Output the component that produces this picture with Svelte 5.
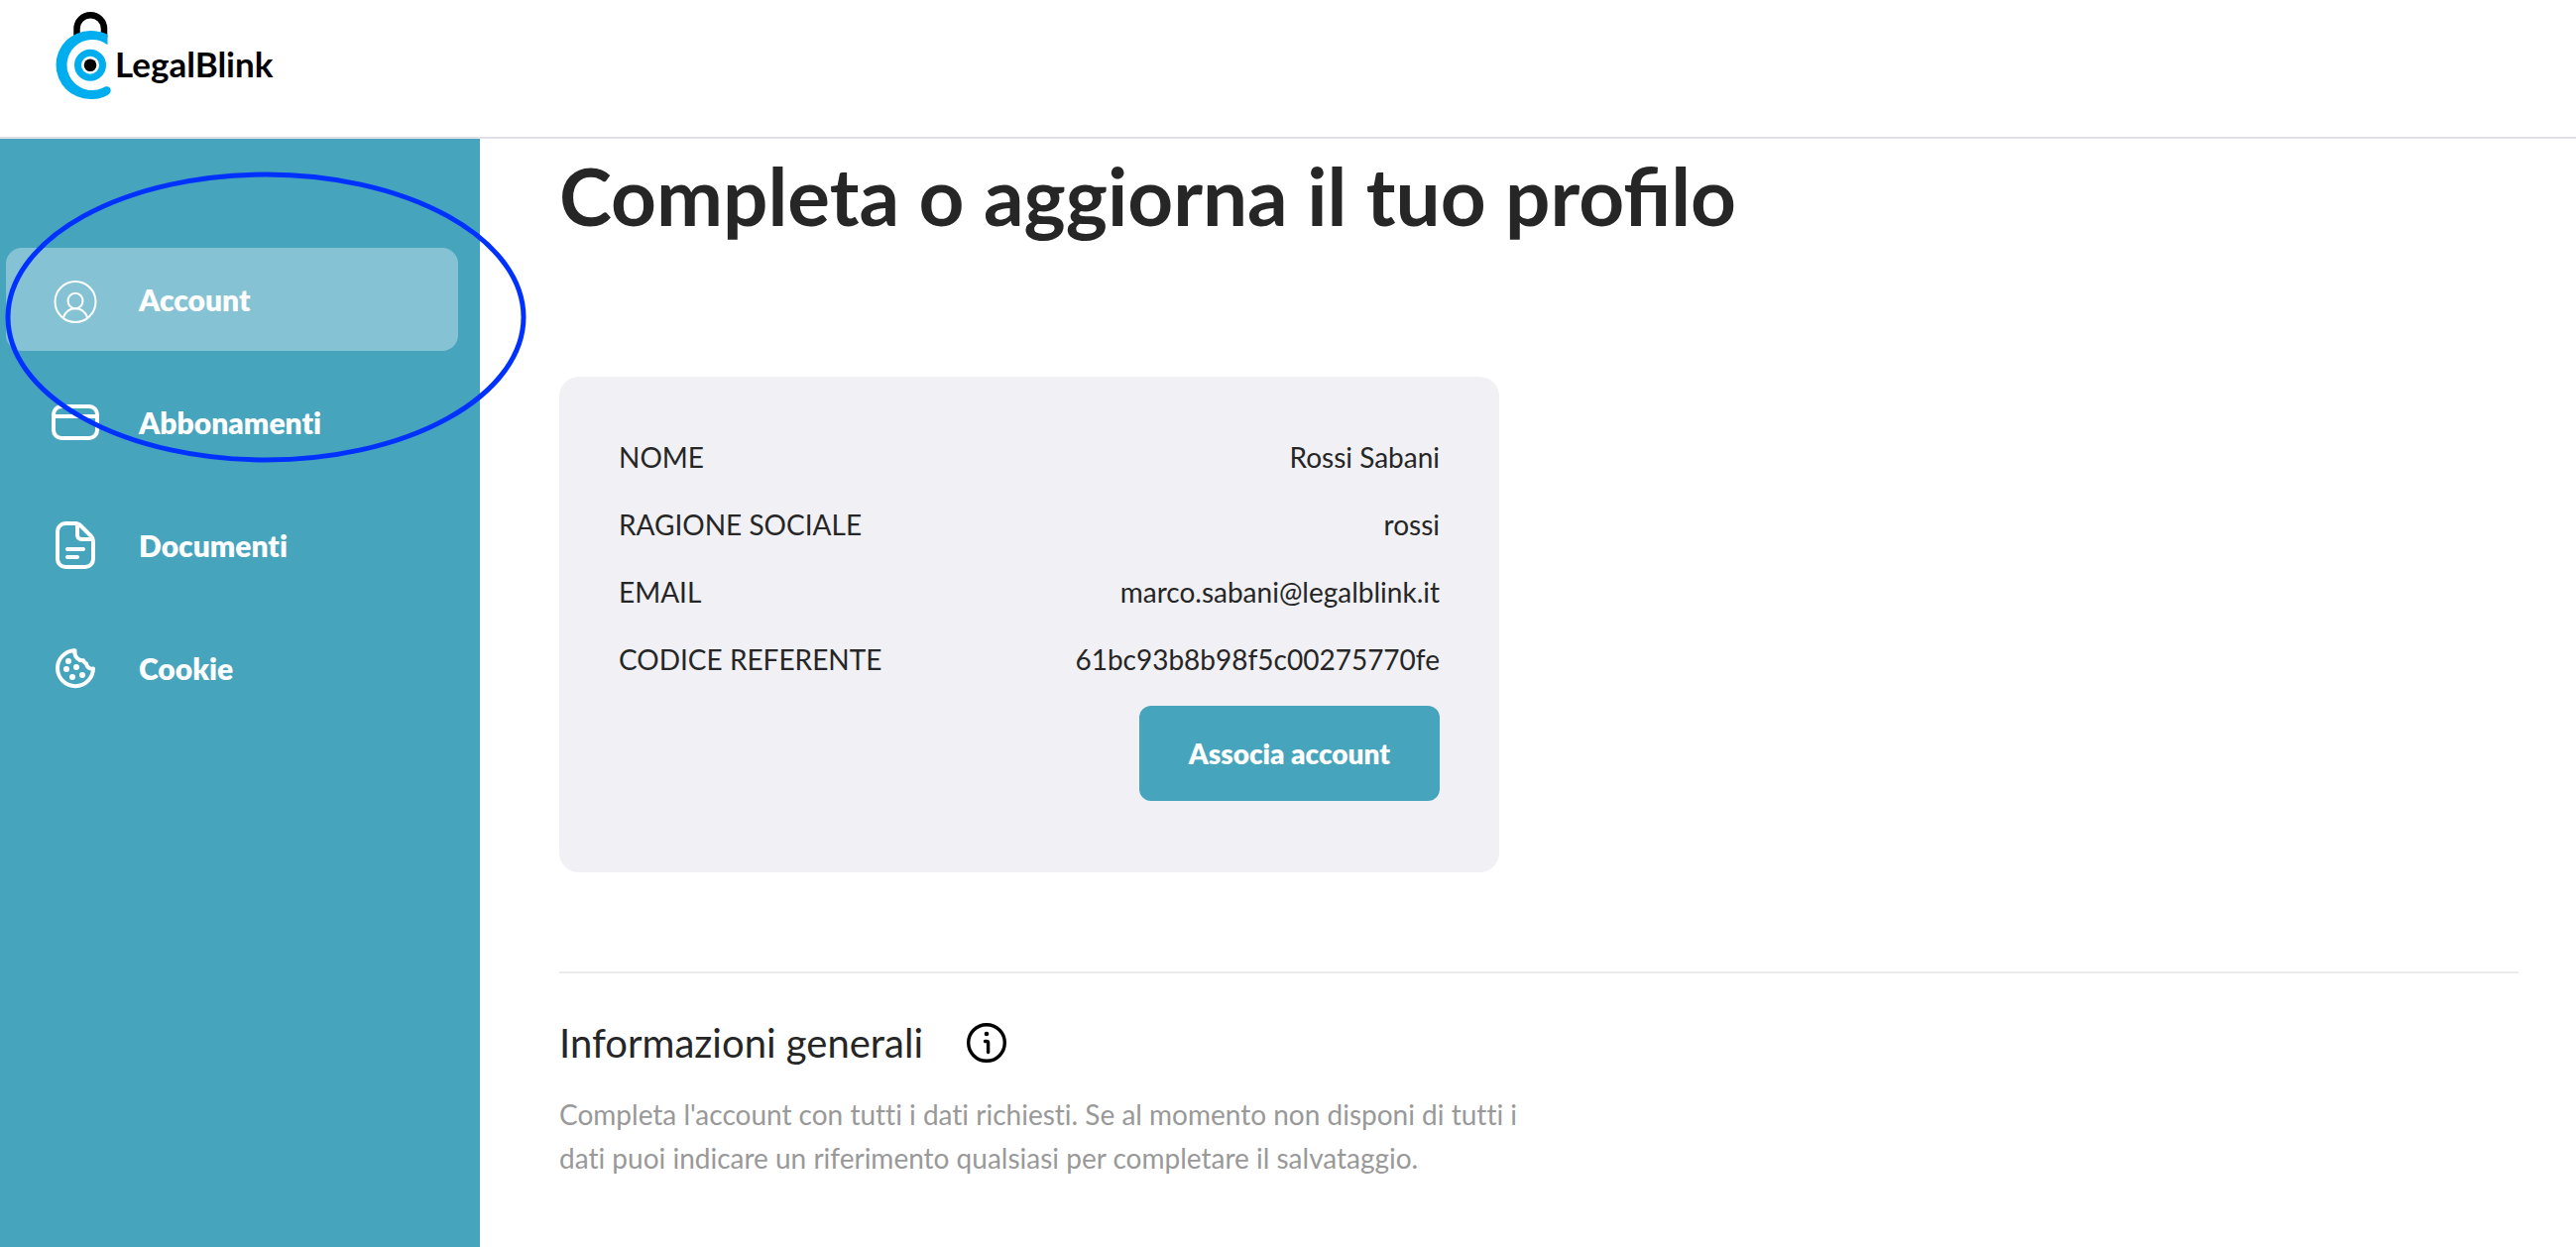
<script>
  const navItems = [
    { id: 'account', label: 'Account', active: true },
    { id: 'subscriptions', label: 'Abbonamenti', active: false },
    { id: 'documents', label: 'Documenti', active: false },
    { id: 'cookie', label: 'Cookie', active: false }
  ];

  const profile = [
    { label: 'NOME', value: 'Rossi Sabani' },
    { label: 'RAGIONE SOCIALE', value: 'rossi' },
    { label: 'EMAIL', value: 'marco.sabani@legalblink.it' },
    { label: 'CODICE REFERENTE', value: '61bc93b8b98f5c00275770fe' }
  ];
</script>

<div class="page">
  <header class="topbar">
    <a class="brand" href="#home">
      <svg class="brand-mark" viewBox="0 0 56 88" aria-hidden="true">
        <path d="M21.500 26V17a13.700 13.700 0 0 1 27.500 0V26" fill="none" stroke="#000" stroke-width="6.500" />
        <path
          d="M52.500 22.800V33.300A25.500 25.500 0 1 0 48 76.600C49.500 75.600 51.500 75 53 75.400C56 76.200 56.600 80 54.400 82.400C49.500 86.400 43 88 35 88A34.500 34.500 0 0 1 35 19C41.500 19 47 20.200 52.500 22.800Z"
          fill="#00aeef"
        />
        <circle cx="35" cy="53.700" r="12.500" fill="none" stroke="#00aeef" stroke-width="7" />
        <circle cx="35" cy="53.700" r="6.300" fill="#000" />
      </svg>
      <span class="brand-name">LegalBlink</span>
    </a>
  </header>

  <div class="body">
    <aside class="sidebar">
      <nav aria-label="Menu principale">
        {#each navItems as item (item.id)}
          <a class="nav-item" class:active={item.active} href={'#' + item.id}>
            <svg class="nav-icon" viewBox="0 0 48 48" fill="none" stroke="currentColor" aria-hidden="true">
              {#if item.id === 'account'}
                <g stroke-width="2">
                  <circle cx="24" cy="26.500" r="20.500" />
                  <ellipse cx="24" cy="25.500" rx="7.500" ry="7.800" />
                  <path d="M11.600 42.600C14 36.500 18.500 33.300 24 33.300S34 36.500 36.400 42.600" />
                </g>
              {:else if item.id === 'subscriptions'}
                <rect x="2" y="8" width="44" height="32" rx="8" stroke-width="4" />
                <path d="M2 18H46" stroke-width="4" />
              {:else if item.id === 'documents'}
                <g stroke-width="4" stroke-linecap="round" stroke-linejoin="round">
                  <path d="M24 2H14A8 8 0 0 0 6 10V38A8 8 0 0 0 14 46H34A8 8 0 0 0 42 38V20C42 17.500 41 16 39.500 14.500L30 5C28.500 3.200 26.500 2 24 2Z" />
                  <path d="M26 3V14A4 4 0 0 0 30 18H41M16 28H32M16 36H26" />
                </g>
              {:else}
                <path
                  d="M22.500 6.200A18 18 0 1 0 42 24.500C38.500 25.200 35.500 23 35 19.500C33.500 18.500 32.500 18 32 16.200C27.500 17 22.500 12.500 23.500 6.200Z"
                  stroke-width="4"
                  stroke-linejoin="round"
                />
                <g fill="currentColor" stroke="none">
                  <circle cx="17" cy="17" r="3" />
                  <circle cx="15" cy="25" r="3" />
                  <circle cx="25" cy="23" r="3" />
                  <circle cx="21" cy="33" r="3" />
                  <circle cx="31" cy="31" r="3" />
                </g>
              {/if}
            </svg>
            <span>{item.label}</span>
          </a>
        {/each}
      </nav>
      <svg class="highlight" viewBox="0 0 526 294" fill="none" aria-hidden="true">
        <ellipse cx="263" cy="147" rx="260" ry="144" stroke="#0032ff" stroke-width="5" />
      </svg>
    </aside>

    <main class="content">
      <h1>Completa o aggiorna il tuo profilo</h1>

      <section class="card">
        <dl>
          {#each profile as row (row.label)}
            <div class="row">
              <dt>{row.label}</dt>
              <dd>{row.value}</dd>
            </div>
          {/each}
        </dl>
        <button type="button">Associa account</button>
      </section>

      <section class="general">
        <div class="general-head">
          <h2>Informazioni generali</h2>
          <svg class="info" viewBox="0 0 40 40" fill="none" stroke="#000" aria-hidden="true">
            <circle cx="20" cy="20" r="18.300" stroke-width="3.400" />
            <path d="M18.500 18.500H20C21 18.500 21.600 19 21.600 20V29.500" stroke-width="3.400" stroke-linecap="round" />
            <circle cx="20" cy="11" r="2.300" fill="#000" stroke="none" />
          </svg>
        </div>
        <p>
          Completa l'account con tutti i dati richiesti. Se al momento non disponi di tutti i dati puoi
          indicare un riferimento qualsiasi per completare il salvataggio.
        </p>
      </section>
    </main>
  </div>
</div>

<style>
  :global(body) {
    margin: 0;
    background: #fff;
  }

  .page {
    box-sizing: border-box;
    min-height: 100vh;
    display: flex;
    flex-direction: column;
    font-family: Lato, 'Liberation Sans', sans-serif;
    font-size: 28px;
    font-variant-ligatures: none;
    color: #262626;
  }

  .topbar {
    display: flex;
    padding: 12px 56px 38px;
    border-bottom: 2px solid #e0e0e6;
  }

  .brand {
    display: flex;
    align-items: center;
    gap: 4px;
    color: #000;
    text-decoration: none;
  }

  .brand-mark {
    width: 56px;
    height: 88px;
  }

  .brand-name {
    padding-top: 16px;
    font-size: 35px;
    line-height: 44px;
    font-weight: 700;
  }

  .body {
    flex: 1;
    display: flex;
  }

  .sidebar {
    position: relative;
    box-sizing: border-box;
    flex: 0 0 484px;
    padding: 110px 22px 40px 6px;
    background: #47a4bd;
  }

  nav {
    display: flex;
    flex-direction: column;
    gap: 20px;
  }

  .nav-item {
    box-sizing: border-box;
    height: 104px;
    display: flex;
    align-items: center;
    gap: 40px;
    padding: 0 46px;
    border-radius: 16px;
    color: #fff;
    font-size: 30px;
    font-weight: 800;
    text-decoration: none;
  }

  .nav-item.active {
    background: #85c3d4;
  }

  .nav-icon {
    width: 48px;
    height: 48px;
  }

  /* Hand-drawn style ring that calls out the active entry */
  .highlight {
    position: absolute;
    top: 33px;
    left: 5px;
    width: 526px;
    height: 294px;
    pointer-events: none;
  }

  .content {
    flex: 1;
    min-width: 0;
    padding: 12px 58px 60px 80px;
  }

  h1 {
    margin: 0 0 138px;
    font-size: 80px;
    line-height: 90px;
    font-weight: 700;
    font-variant-ligatures: normal;
  }

  .card {
    box-sizing: border-box;
    max-width: 948px;
    display: flex;
    flex-direction: column;
    align-items: flex-end;
    padding: 47px 60px 72px;
    border-radius: 20px;
    background: #f0f0f5;
  }

  dl {
    width: 100%;
    margin: 0 0 13px;
  }

  .row {
    display: flex;
    justify-content: space-between;
    line-height: 68px;
  }

  dd {
    margin: 0;
  }

  button {
    height: 96px;
    padding: 0 50px;
    border: 0;
    border-radius: 12px;
    background: #47a4bd;
    color: #fff;
    font: inherit;
    font-weight: 800;
  }

  .general {
    margin-top: 100px;
    padding-top: 44px;
    border-top: 2px solid #ebebeb;
  }

  .general-head {
    display: flex;
    align-items: center;
    gap: 44px;
  }

  h2 {
    margin: 0;
    font-size: 40px;
    line-height: 52px;
    font-weight: 400;
  }

  .info {
    width: 40px;
    height: 40px;
  }

  p {
    max-width: 984px;
    margin: 24px 0 0;
    line-height: 44px;
    color: #999;
  }
</style>
